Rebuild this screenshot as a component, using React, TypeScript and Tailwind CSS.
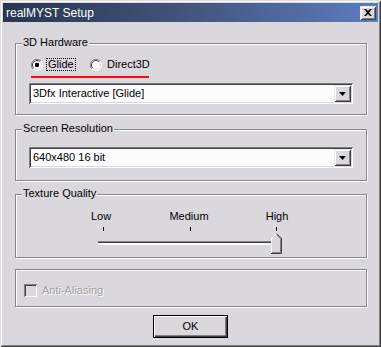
import React from 'react';

const face = 'bg-[#dad8dc]';

function GroupBox({
  label,
  className,
  children,
}: {
  label?: string;
  className: string;
  children: React.ReactNode;
}) {
  return (
    <div
      className={`relative ml-[12px] w-[352px] shrink-0 border border-[#868686] shadow-[1px_1px_0_#ffffff,inset_1px_1px_0_#ffffff] ${className}`}
    >
      {label && (
        <span className={`absolute left-[6px] top-[-8px] px-[1px] text-[11px] leading-[13px] text-black ${face}`}>
          {label}
        </span>
      )}
      {children}
    </div>
  );
}

function Radio({ checked }: { checked?: boolean }) {
  return (
    <svg width="12" height="12" viewBox="0 0 12 12" className="shrink-0">
      <circle cx="6" cy="6" r="5.5" fill="#ffffff" />
      <path d="M10 2 A5.5 5.5 0 0 0 2 10" stroke="#808080" strokeWidth="1" fill="none" transform="translate(0 0)" />
      <path d="M9.2 2.8 A4.5 4.5 0 0 0 2.8 9.2" stroke="#404040" strokeWidth="1" fill="none" />
      <path d="M2 10 A5.5 5.5 0 0 0 10 2" stroke="#ffffff" strokeWidth="1" fill="none" />
      <path d="M2.8 9.2 A4.5 4.5 0 0 0 9.2 2.8" stroke="#dad8dc" strokeWidth="1" fill="none" />
      {checked && <rect x="4" y="4" width="4" height="4" rx="1" fill="#000000" />}
    </svg>
  );
}

function Combo({ value }: { value: string }) {
  return (
    <div className="ml-[13px] flex h-[21px] w-[324px] items-center bg-[#fcfcfc] p-[2px] shadow-[inset_1px_1px_0_#808080,inset_-1px_-1px_0_#ffffff,inset_2px_2px_0_#404040,inset_-2px_-2px_0_#dad8dc]">
      <span className="flex-1 pl-[2px] text-[11px] leading-[13px] text-black">{value}</span>
      <div className={`flex h-[17px] w-[17px] items-center justify-center ${face} shadow-[inset_1px_1px_0_#e8e8e8,inset_-1px_-1px_0_#404040,inset_2px_2px_0_#ffffff,inset_-2px_-2px_0_#808080]`}>
        <svg width="7" height="4" viewBox="0 0 7 4">
          <path d="M0 0 H7 L3.5 4 Z" fill="#000000" />
        </svg>
      </div>
    </div>
  );
}

export default function App() {
  return (
    <div
      className={`flex h-[347px] w-[381px] flex-col p-[3px] font-['Liberation_Sans',Arial,sans-serif] ${face} shadow-[inset_1px_1px_0_#dcdcdc,inset_-1px_-1px_0_#404040,inset_2px_2px_0_#ffffff,inset_-2px_-2px_0_#808080]`}
    >
      <div className="flex h-[19px] shrink-0 items-center justify-between bg-linear-to-r from-[#283650] via-[#44557e] to-[#5b7dbf] pl-[3px] pr-[2px]">
        <span className="text-[12px] leading-[14px] text-white">realMYST Setup</span>
        <div className={`flex h-[14px] w-[16px] items-center justify-center ${face} shadow-[inset_1px_1px_0_#e8e8e8,inset_-1px_-1px_0_#404040,inset_2px_2px_0_#ffffff,inset_-2px_-2px_0_#808080]`}>
          <svg width="8" height="7" viewBox="0 0 8 7">
            <path d="M0 0 H2 L4 2 L6 0 H8 L5 3.5 L8 7 H6 L4 5 L2 7 H0 L3 3.5 Z" fill="#000000" />
          </svg>
        </div>
      </div>

      <GroupBox label="3D Hardware" className="mt-[21px] h-[72px] pt-[14px]">
        <div className="flex h-[13px] items-center pl-[15px] text-[11px] leading-[11px] text-black">
          <div className="flex w-[59px] shrink-0 items-center">
            <Radio checked />
            <span className="ml-[3px] border border-dotted border-black px-[1px]">Glide</span>
          </div>
          <div className="flex items-center">
            <Radio />
            <span className="ml-[3px] border border-transparent px-[1px]">Direct3D</span>
          </div>
        </div>
        <div className="ml-[15px] mt-[5px] h-[2px] w-[118px] bg-[#ee1111]" />
        <div className="mt-[5px]">
          <Combo value="3Dfx Interactive [Glide]" />
        </div>
      </GroupBox>

      <GroupBox label="Screen Resolution" className="mt-[14px] h-[52px] pt-[17px]">
        <Combo value="640x480 16 bit" />
      </GroupBox>

      <GroupBox label="Texture Quality" className="mt-[13px] h-[64px] pt-[15px]">
        <div className="ml-[41px] flex h-[13px] text-[11px] leading-[13px] text-black">
          <span className="w-[88px] text-center">Low</span>
          <span className="w-[88px] text-center">Medium</span>
          <span className="w-[88px] text-center">High</span>
        </div>
        <div className="mt-[4px] flex h-[4px]">
          <div className="ml-[87px] w-px bg-black" />
          <div className="ml-[86px] w-px bg-black" />
          <div className="ml-[85px] w-px bg-black" />
        </div>
        <div className="relative ml-[82px] mt-[10px] h-[4px] w-[184px] border-t border-b border-t-[#808080] border-b-white bg-[#f4f4f4] shadow-[inset_0_1px_0_#404040]">
          <svg width="11" height="21" viewBox="0 0 11 21" className="absolute left-[173px] top-[-9px]">
            <path d="M0 5 L5 0 L10 5 V20 H0 Z" fill="#dad8dc" />
            <path d="M0.5 20 V5.2 L5 0.7" stroke="#ffffff" strokeWidth="1" fill="none" />
            <path d="M5.5 0.7 L10.5 5.2 V20.5 H0" stroke="#404040" strokeWidth="1" fill="none" />
            <path d="M5.5 1.9 L9.5 5.6 V19.5 H1" stroke="#808080" strokeWidth="1" fill="none" />
          </svg>
        </div>
      </GroupBox>

      <GroupBox className="mt-[11px] h-[38px] pt-[14px]">
        <div className="flex h-[13px] items-center pl-[8px]">
          <div className="h-[13px] w-[13px] shrink-0 shadow-[inset_1px_1px_0_#808080,inset_-1px_-1px_0_#ffffff,inset_2px_2px_0_#404040,inset_-2px_-2px_0_#dad8dc]" />
          <span className="ml-[5px] text-[11px] leading-[13px] text-[#a0a0a0] [text-shadow:1px_1px_0_#ffffff]">
            Anti-Aliasing
          </span>
        </div>
      </GroupBox>

      <div className="mx-auto mt-[8px] flex h-[23px] w-[75px] shrink-0 items-center justify-center border border-black shadow-[inset_1px_1px_0_#ffffff,inset_-1px_-1px_0_#404040,inset_-2px_-2px_0_#808080] text-[11px] leading-[13px] text-black">
        OK
      </div>
    </div>
  );
}
